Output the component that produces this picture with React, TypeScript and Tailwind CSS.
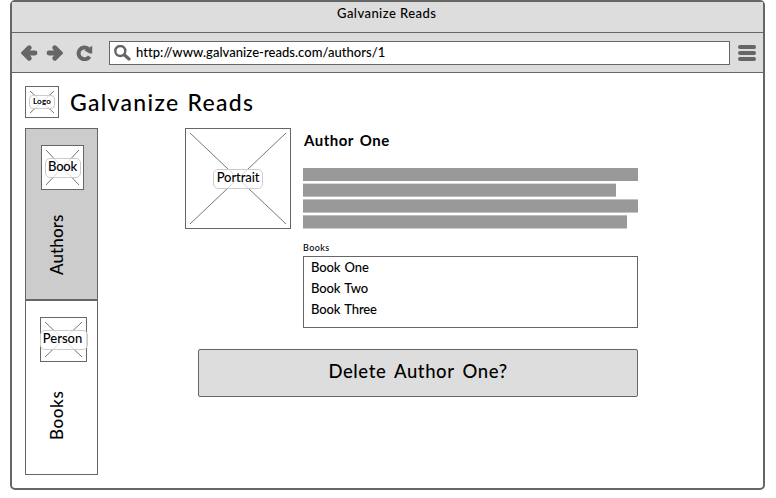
import type { ReactNode } from "react";

function Placeholder({ w, h, frame, label, children }: { w: number; h: number; frame: string; label: string; children: ReactNode }) {
  return (
    <div className={`relative flex shrink-0 items-center justify-center border border-[#666] bg-white ${frame}`}>
      <svg className="absolute -left-px -top-px" width={w} height={h} stroke="#777" strokeWidth="1" fill="none">
        <path d={`M5 5L${w - 5} ${h - 5}M${w - 5} 5L5 ${h - 5}`} />
      </svg>
      <span className={`relative flex shrink-0 items-center justify-center whitespace-nowrap border border-[#ccc] bg-white/75 ${label}`}>{children}</span>
    </div>
  );
}

function Arrow({ flip }: { flip?: boolean }) {
  return (
    <svg width="17" height="16" viewBox="0 0 17 16" className={flip ? "-scale-x-100" : ""}>
      <path d="M14 8H5M8.2 2.8L3 8L8.2 13.2" fill="none" stroke="#666" strokeWidth="4.8" strokeLinecap="round" strokeLinejoin="miter" />
    </svg>
  );
}

export default function App() {
  return (
    <div className="h-[498px] w-[776px] overflow-hidden bg-white pl-[10px] font-['Lato',sans-serif] font-medium text-black">
      <div className="h-[490px] w-[755px] rounded-[5px] border-2 border-[#666] bg-white">
        <header className="h-[31px] border-b border-[#666] bg-[#ddd] pl-[325px] pt-[2px] text-[13px] leading-[18px] tracking-[0.45px]">
          Galvanize Reads
        </header>
        <div className="flex h-10 items-center border-b border-[#666] bg-[#ddd] pl-[9px]">
          <Arrow />
          <div className="ml-2 flex"><Arrow flip /></div>
          <svg className="ml-[13px]" width="17" height="16" viewBox="0 0 17 16">
            <path d="M13.6 11.6A6 5.9 0 1 1 12.2 3.6" fill="none" stroke="#666" strokeWidth="4" />
            <path d="M16.2 0.8V8.4H13.8L8.4 5.6Z" fill="#666" />
          </svg>
          <div className="ml-4 flex h-6 w-[621px] items-center border border-[#666] bg-white pl-1">
            <svg width="17" height="16" viewBox="0 0 17 16" fill="none" stroke="#666">
              <circle cx="6.3" cy="6" r="5" strokeWidth="2.4" />
              <path d="M10.2 9.8L15 14" strokeWidth="3.2" strokeLinecap="round" />
            </svg>
            <span className="ml-[5px] mt-px whitespace-nowrap text-[13px] tracking-[0.04px]">http://www.galvanize-reads.com/authors/1</span>
          </div>
          <div className="ml-2 flex flex-col gap-[2px]">
            <i className="h-1 w-[18px] rounded-[2px] bg-[#666]" />
            <i className="h-1 w-[18px] rounded-[2px] bg-[#666]" />
            <i className="h-1 w-[18px] rounded-[2px] bg-[#666]" />
          </div>
        </div>

        <div className="pl-[13px] pt-[13px]">
          <div className="flex h-8 items-center">
            <Placeholder w={34} h={32} frame="h-8 w-[34px]" label="h-[14px] w-[26px] rounded-[4px] pb-0.5 text-[8px] font-bold tracking-[0.2px]">
              Logo
            </Placeholder>
            <h1 className="ml-[11px] text-[23px] leading-8 tracking-[1.3px] [word-spacing:1px]">Galvanize Reads</h1>
          </div>

          <div className="mt-[10px] flex">
            <nav className="w-[73px]">
              <div className="h-[172px] border border-[#666] bg-[#ccc] pl-[15px] pt-4">
                <Placeholder w={43} h={45} frame="h-[45px] w-[43px]" label="h-5 w-9 rounded-[5px] pb-0.5 text-[13px] tracking-[-0.2px]">
                  Book
                </Placeholder>
                <span className="ml-[4px] mt-[24px] block h-[61px] w-6 rotate-180 text-[17px] leading-6 tracking-[0.1px] [writing-mode:vertical-rl]">Authors</span>
              </div>
              <div className="h-[175px] border border-[#666] bg-white pl-[14px] pt-4">
                <Placeholder w={47} h={45} frame="h-[45px] w-[47px]" label="h-5 w-12 rounded-[5px] pb-0.5 pr-0.5 text-[13px]">
                  Person
                </Placeholder>
                <span className="ml-[5px] mt-[28px] block h-[50px] w-6 rotate-180 text-[17px] leading-6 tracking-[0.6px] [writing-mode:vertical-rl]">Books</span>
              </div>
            </nav>

            <main className="ml-[87px] w-[453px]">
              <div className="flex">
                <Placeholder w={106} h={101} frame="h-[101px] w-[106px]" label="h-5 w-[50px] rounded-[5px] pb-0.5 text-[13px] tracking-[-0.1px]">
                  Portrait
                </Placeholder>
                <section className="ml-3 w-[335px]">
                  <h2 className="h-10 whitespace-nowrap pl-px text-[15px] font-bold leading-6 tracking-[0.5px] [word-spacing:2px]">Author One</h2>
                  <div className="h-[13px] bg-[#999]" />
                  <div className="mt-[2px] h-[14px] w-[313px] border-b border-t border-b-[#bbb] border-t-[#ddd] bg-[#999]" />
                  <div className="mt-[2px] h-[14px] border-y border-[#c4c4c4] bg-[#999]" />
                  <div className="mt-[2px] h-[14px] w-[324px] border-b border-t border-b-[#ccc] border-t-[#bbb] bg-[#999]" />
                </section>
              </div>
              <section className="ml-[118px] mt-[12px]">
                <h3 className="h-[15px] pt-px text-[9px] leading-3 tracking-[0.4px]">Books</h3>
                <ul className="h-[72px] border border-[#666] pl-[7px] text-[13px] leading-[21px] tracking-[-0.1px] [word-spacing:1px]">
                  <li>Book One</li>
                  <li>Book Two</li>
                  <li>Book Three</li>
                </ul>
              </section>
              <button className="ml-[13px] mt-[21px] block h-12 w-[440px] rounded-[2px] border border-[#666] bg-[#ddd] pb-0.5 text-[18.5px] tracking-[0.6px] [word-spacing:3px]">
                Delete Author One?
              </button>
            </main>
          </div>
        </div>
      </div>
    </div>
  );
}
